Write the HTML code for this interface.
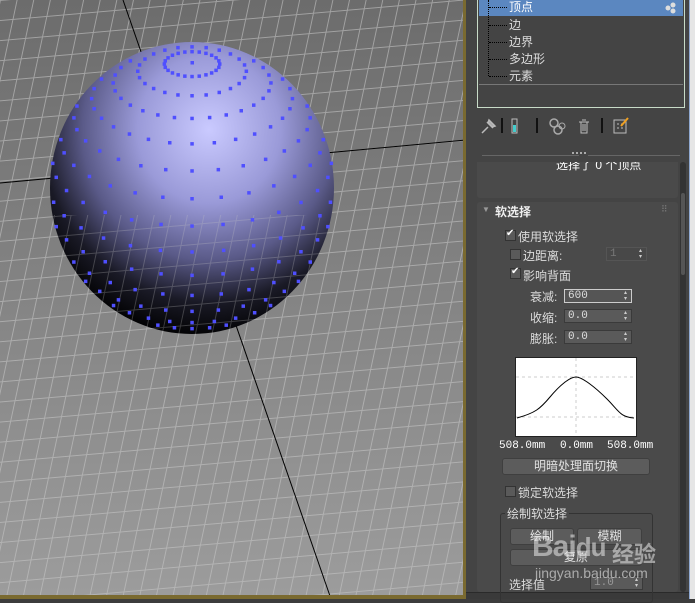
<!DOCTYPE html>
<html><head><meta charset="utf-8"><style>
*{margin:0;padding:0;box-sizing:border-box}
body{width:695px;height:599px;overflow:hidden;background:#3c3c3c;font-family:"Liberation Sans","Noto Sans CJK SC",sans-serif;font-size:12px;color:#dcdcdc;position:relative}
.a{position:absolute;white-space:nowrap}
.cb{position:absolute;width:11px;height:11px;background:#5a5a5a;border:1px solid #333}
.cb.on::after{content:"✔";position:absolute;left:0;top:-3px;font-size:10px;color:#fff}
.sp{position:absolute;height:14px;background:#5a5a5a;border:1px solid #3a3a3a;font-size:11px;color:#ddd;padding-left:3px;line-height:12px;font-family:"Liberation Mono",monospace}
.sp::after{content:"▴▾";position:absolute;right:2px;top:0;font-size:6px;line-height:6px;width:5px;word-break:break-all;white-space:normal;color:#ccc}
.btn{position:absolute;height:17px;background:#5c5c5c;border:1px solid #3f3f3f;border-radius:3px;text-align:center;line-height:15px;color:#e0e0e0}
</style></head><body>
<svg class="a" style="left:0;top:0" width="466" height="596" viewBox="0 0 466 596">
<defs>
<linearGradient id="bg" x1="0" y1="0" x2="0" y2="1"><stop offset="0" stop-color="#6c6c6c"/><stop offset="1" stop-color="#9c9c9c"/></linearGradient>
<pattern id="grid" width="17" height="20" patternUnits="userSpaceOnUse" patternTransform="rotate(-5) skewX(-17)">
<path d="M0 0.5H17M0.5 0V20" stroke="#c4c4c4" stroke-width="1" fill="none" opacity="0.6"/></pattern>
<radialGradient id="sph" cx="0.56" cy="0.3" r="0.72"><stop offset="0" stop-color="#cacaff"/><stop offset="0.35" stop-color="#9a9ad8"/><stop offset="0.62" stop-color="#5a5a88"/><stop offset="0.82" stop-color="#1a1a26"/><stop offset="1" stop-color="#000"/></radialGradient>
<clipPath id="sc"><ellipse cx="192" cy="188" rx="142" ry="146"/></clipPath>
</defs>
<rect width="466" height="596" fill="url(#bg)"/>
<rect width="466" height="596" fill="url(#grid)"/>
<line x1="123" y1="0" x2="330" y2="596" stroke="#000" stroke-width="1"/>
<line x1="0" y1="183" x2="466" y2="140" stroke="#000" stroke-width="1"/>
<ellipse cx="192" cy="188" rx="142" ry="146" fill="url(#sph)"/>
<g clip-path="url(#sc)" opacity="0.45"><rect x="40" y="215" width="300" height="130" fill="url(#grid)"/></g>
<g id="dots" fill="#4f4fff"></g>
<rect x="463" y="0" width="3" height="596" fill="#7a6a30"/>
</svg>
<div class="a" style="left:0;top:595px;width:466px;height:4px;background:#7a6a30"></div>
<script>
(function(){var g=document.getElementById('dots'),s='';var se=0.45,ce=0.89;
for(var k=1;k<=14;k++){var ph=(90-11.25*k)*Math.PI/180;var sp=Math.sin(ph),cp=Math.cos(ph);
var cy=188-142*ce*sp,rx=142*cp,ry=rx*se;var n=k<3?24:28;
for(var i=0;i<n;i++){var th=2*Math.PI*i/n;if(se*sp+ce*cp*Math.sin(th)<0.02)continue;
var x=192+rx*Math.cos(th),y=cy+ry*Math.sin(th);s+='<rect x="'+(x-1.7).toFixed(1)+'" y="'+(y-1.7).toFixed(1)+'" width="3.5" height="3.5"/>';}}
s+='<rect x="190.5" y="61" width="3.5" height="3.5"/>';g.innerHTML=s;})();
</script>
<div class="a" style="left:466px;top:0;width:223px;height:599px;background:#444"></div>
<div class="a" style="left:689px;top:0;width:6px;height:599px;background:#e6e6e6;border-left:1px solid #8fa8d0"></div>
<div class="a" style="left:477px;top:-2px;width:208px;height:110px;border:1px solid #c8dcc8;background:#444"></div>
<div class="a" style="left:479px;top:0;width:204px;height:16px;background:#5b87c0"></div>
<div class="a" style="left:479px;top:84px;width:204px;height:1px;background:#777"></div>
<div class="a" style="left:488px;top:0;width:1px;height:76px;border-left:1px dotted #000"></div>
<div class="a" style="left:489px;top:7px;width:18px;border-top:1px dotted #000"></div>
<div class="a" style="left:489px;top:25px;width:18px;border-top:1px dotted #000"></div>
<div class="a" style="left:489px;top:42px;width:18px;border-top:1px dotted #000"></div>
<div class="a" style="left:489px;top:59px;width:18px;border-top:1px dotted #000"></div>
<div class="a" style="left:489px;top:76px;width:18px;border-top:1px dotted #000"></div>
<div class="a" style="left:509px;top:0;color:#fff;line-height:15px">顶点</div>
<svg class="a" style="left:664px;top:1px" width="14" height="14"><circle cx="4" cy="7" r="2.5" fill="#ddd"/><circle cx="9" cy="4" r="2.5" fill="#ddd"/><circle cx="9" cy="10" r="2.5" fill="#ddd"/></svg>
<div class="a" style="left:509px;top:17px;line-height:17px">边</div>
<div class="a" style="left:509px;top:34px;line-height:17px">边界</div>
<div class="a" style="left:509px;top:51px;line-height:17px">多边形</div>
<div class="a" style="left:509px;top:68px;line-height:17px">元素</div>
<svg class="a" style="left:478px;top:114px" width="160" height="24">
<path d="M4 19L10 13M9 8L15 14M11 6l6 6-3 1-4-4z" stroke="#bbb" stroke-width="1.5" fill="#aaa"/>
<rect x="23" y="4" width="2" height="15" fill="#111"/>
<rect x="34" y="5" width="5" height="14" fill="none" stroke="#bbb"/><rect x="35" y="11" width="3" height="7" fill="#4cc"/>
<rect x="58" y="4" width="2" height="15" fill="#111"/>
<circle cx="76" cy="9" r="4" fill="none" stroke="#aaa" stroke-width="1.5"/><circle cx="80" cy="16" r="4" fill="none" stroke="#aaa" stroke-width="1.5"/><circle cx="84" cy="12" r="3" fill="none" stroke="#aaa"/>
<path d="M101 8h10M103 8v11h6V8M105 10v7M107 10v7M104 6h4" stroke="#bbb" fill="none"/>
<rect x="123" y="4" width="2" height="15" fill="#111"/>
<rect x="136" y="6" width="12" height="13" fill="none" stroke="#bbb"/><path d="M139 10h2M143 10h2M139 14h2M143 14h2" stroke="#bbb"/><path d="M143 12l7-8" stroke="#f0a020" stroke-width="2"/>
</svg>
<div class="a" style="left:482px;top:155px;width:97px;height:1px;background:#666"></div>
<div class="a" style="left:588px;top:155px;width:92px;height:1px;background:#666"></div>
<div class="a" style="left:572px;top:152px;width:14px;border-top:2px dotted #aaa"></div>
<div class="a" style="left:477px;top:162px;width:201px;height:36px;background:#4a4a4a;border-radius:0 0 3px 3px;overflow:hidden">
<div class="a" style="left:79px;top:-6px;color:#fff">选择了 0 个顶点</div></div>
<div class="a" style="left:680px;top:162px;width:6px;height:430px;background:#333;border-radius:3px"></div>
<div class="a" style="left:681px;top:193px;width:4px;height:82px;background:#555;border-radius:2px"></div>
<div class="a" style="left:477px;top:202px;width:201px;height:390px;background:#4a4a4a;border-radius:3px"></div>
<div class="a" style="left:466px;top:592px;width:223px;height:7px;background:#3a3a3a;border-top:1px solid #2a2a2a"></div>
<div class="a" style="left:482px;top:205px;font-size:8px;color:#999">▼</div>
<div class="a" style="left:495px;top:203px;font-weight:bold;color:#eee">软选择</div>
<div class="a" style="left:661px;top:204px;font-size:9px;color:#777">⠿</div>
<div class="cb on" style="left:505px;top:230px"></div><div class="a" style="left:518px;top:228px">使用软选择</div>
<div class="cb" style="left:510px;top:249px"></div><div class="a" style="left:523px;top:247px">边距离:</div>
<div class="sp" style="left:606px;top:247px;width:41px;color:#777;background:#484848;border-color:#555">1</div>
<div class="cb on" style="left:510px;top:268px"></div><div class="a" style="left:523px;top:267px">影响背面</div>
<div class="a" style="left:530px;top:288px">衰减:</div><div class="sp" style="left:564px;top:289px;width:68px;border-color:#ccc;background:#555">600</div>
<div class="a" style="left:530px;top:309px">收缩:</div><div class="sp" style="left:564px;top:309px;width:68px">0.0</div>
<div class="a" style="left:530px;top:330px">膨胀:</div><div class="sp" style="left:564px;top:330px;width:68px">0.0</div>
<svg class="a" style="left:515px;top:357px" width="122" height="80">
<rect x="0.5" y="0.5" width="121" height="79" fill="#fff" stroke="#222"/>
<path d="M61 1V79M1 20H121M1 60H121" stroke="#ccc" stroke-dasharray="3 3"/>
<path d="M2 61C20 56 25 52 35 40S55 20 61 20S80 30 92 42S105 60 119 61" stroke="#000" fill="none"/>
</svg>
<div class="a" style="left:499px;top:440px;font-family:'Liberation Mono',monospace;font-size:11px;color:#fff">508.0mm</div>
<div class="a" style="left:560px;top:440px;font-family:'Liberation Mono',monospace;font-size:11px;color:#fff">0.0mm</div>
<div class="a" style="left:607px;top:440px;font-family:'Liberation Mono',monospace;font-size:11px;color:#fff">508.0mm</div>
<div class="btn" style="left:502px;top:458px;width:148px">明暗处理面切换</div>
<div class="cb" style="left:505px;top:486px"></div><div class="a" style="left:518px;top:484px">锁定软选择</div>
<div class="a" style="left:500px;top:513px;width:153px;height:90px;border:1px solid #333;border-radius:3px"></div>
<div class="a" style="left:505px;top:505px;background:#4a4a4a;padding:0 2px">绘制软选择</div>
<div class="btn" style="left:510px;top:528px;width:64px">绘制</div>
<div class="btn" style="left:577px;top:528px;width:65px">模糊</div>
<div class="btn" style="left:510px;top:549px;width:132px">复原</div>
<div class="a" style="left:509px;top:576px">选择值</div>
<div class="sp" style="left:590px;top:576px;width:53px;color:#999">1.0</div>
<div class="a" style="left:532px;top:530px;font-size:30px;font-weight:bold;color:rgba(235,235,235,0.55);letter-spacing:-1px">Bai<span style="font-size:26px">du</span></div>
<div class="a" style="left:612px;top:537px;font-size:22px;font-weight:bold;color:rgba(235,235,235,0.55)">经验</div>
<div class="a" style="left:535px;top:565px;font-size:14px;color:rgba(235,235,235,0.6)">jingyan.baidu.com</div>
</body></html>
